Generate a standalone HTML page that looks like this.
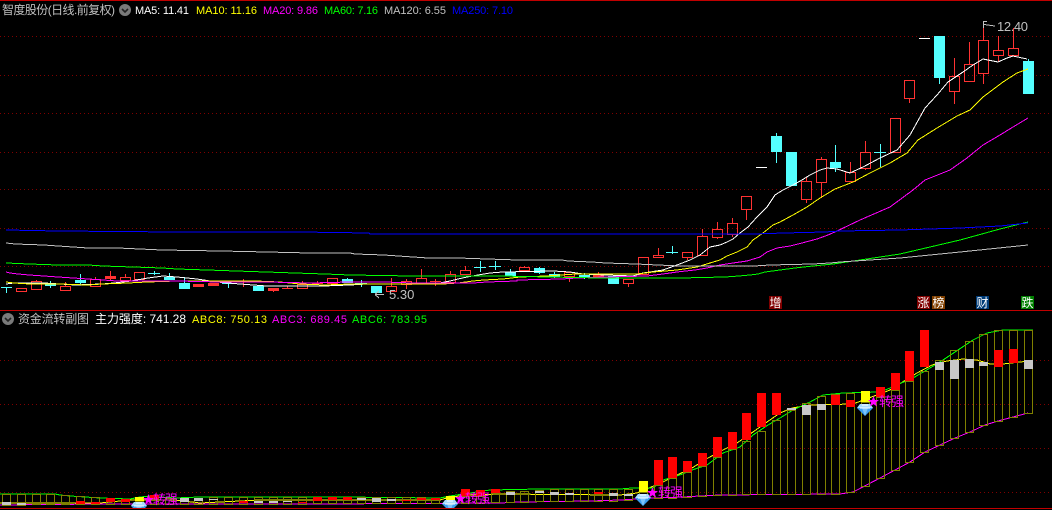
<!DOCTYPE html>
<html lang="zh">
<head>
<meta charset="utf-8">
<title>智度股份</title>
<style>
html,body{margin:0;padding:0;background:#000;width:1052px;height:510px;overflow:hidden}
svg{display:block}
.c{font-family:"Liberation Sans","Noto Sans CJK SC",sans-serif;font-size:12px}
.a{font-family:"Liberation Sans",sans-serif;font-size:11px}
.n{font-family:"Liberation Sans",sans-serif;font-size:13px;fill:#c0c0c0}
.t{font-family:"Noto Sans CJK SC",sans-serif;font-size:12px;fill:#fff;text-anchor:middle}
.z{font-family:"Noto Sans CJK SC",sans-serif;font-size:13px;fill:#f0f}
</style>
</head>
<body>
<svg width="1052" height="510" viewBox="0 0 1052 510" xmlns="http://www.w3.org/2000/svg">
<defs>
<g id="gem">
<path d="M3 0H13L16 4L8 12L0 4Z" fill="#3c9ff0"/>
<path d="M3 0H13L16 4H0Z" fill="#a9dcff"/>
<path d="M5 4L8 12L11 4Z" fill="#7cc4fa"/>
<path d="M3 4H13M5 1H11" stroke="#fff" fill="none"/>
</g>
<path id="star" d="M5.5 0L7 4H11L7.8 6.5L9 10.5L5.5 8.1L2 10.5L3.2 6.5L0 4H4Z" fill="#f0f"/>
<g id="chev"><circle cx="6" cy="6" r="6" fill="#7a7a7a"/><path d="M3 5L6 8L9 5" fill="none" stroke="#222" stroke-width="1.6"/></g>
</defs>

<rect width="1052" height="510" fill="#000"/>

<!-- grid -->
<g stroke="#800000" stroke-dasharray="1 3" shape-rendering="crispEdges" fill="none">
<path d="M0 36.5H1052M0 75.5H1052M0 113.5H1052M0 152.5H1052M0 189.5H1052M0 228.5H1052M0 266.5H1052M0 360.5H1052M0 404.5H1052M0 448.5H1052M0 492.5H1052"/>
</g>

<!-- separators -->
<g fill="#c00000" shape-rendering="crispEdges">
<rect x="0" y="0" width="1052" height="1"/>
<rect x="0" y="310" width="1052" height="1"/>
<rect x="0" y="508" width="1052" height="1"/>
</g>

<!-- candles -->
<g shape-rendering="crispEdges">
<path fill="none" stroke="#ff3232" d="
M16.5 288.5h10v3h-10z
M31.5 281.5h10v8h-10zM36.5 280V281
M60.5 286.5h10v4h-10zM65.5 282V286
M90.5 279.5h10v7h-10zM95.5 277V279
M120.5 277.5h10v3h-10zM125.5 274V277M125.5 281V282
M134.5 272.5h10v7h-10z
M297.5 284.5h10v4h-10zM302.5 281V284
M327.5 278.5h10v5h-10z
M386.5 286.5h10v5h-10zM391.5 278V286
M401.5 281.5h10v3h-10zM406.5 279V281M406.5 285V289
M416.5 278.5h10v5h-10zM421.5 269V278
M445.5 274.5h10v8h-10zM450.5 271V274
M460.5 270.5h10v4h-10zM465.5 266V270
M519.5 267.5h10v3h-10zM524.5 266V267M524.5 271V272
M564.5 272.5h10v4h-10zM569.5 277V282
M623.5 279.5h10v4h-10zM628.5 284V287
M638.5 257.5h10v17h-10z
M653.5 255.5h10v2h-10zM658.5 248V255
M682.5 252.5h10v5h-10zM687.5 258V260
M697.5 236.5h10v19h-10zM702.5 229V236
M712.5 229.5h10v8h-10zM717.5 222V229M717.5 238V239
M727.5 223.5h10v11h-10zM732.5 218V223M732.5 235V237
M741.5 196.5h10v13h-10zM746.5 210V220
M801.5 181.5h10v18h-10zM806.5 177V181M806.5 200V203
M816.5 159.5h10v23h-10zM821.5 157V159M821.5 183V198
M845.5 172.5h10v9h-10zM850.5 162V172
M860.5 152.5h10v16h-10zM865.5 141V152M865.5 169V170
M890.5 118.5h10v34h-10z
M904.5 80.5h10v18h-10zM909.5 99V103
M949.5 76.5h10v15h-10zM954.5 58V76M954.5 92V104
M964.5 64.5h10v17h-10zM969.5 42V64
M978.5 40.5h10v33h-10zM983.5 22V40M983.5 74V84
M993.5 50.5h10v5h-10zM998.5 36V50M998.5 56V62
M1008.5 48.5h10v7h-10zM1013.5 28V48
"/>
<g fill="#ff3232">
<rect x="105" y="276" width="11" height="3"/><rect x="193" y="284" width="11" height="3"/><rect x="208" y="283" width="11" height="3"/><rect x="268" y="288" width="11" height="3"/><rect x="593" y="275" width="11" height="3"/>
</g>
<path fill="none" stroke="#ff3232" d="M110.5 271V281M238 281.5H249M243.5 279V287M282 288.5H293M287.5 286V289M312 283.5H323M317.5 281V284M273.5 291V292M430 281.5H441M435.5 279V286M598.5 272V275"/>
<g fill="#54ffff">
<rect x="45" y="283" width="11" height="3"/><rect x="75" y="280" width="11" height="3"/><rect x="164" y="277" width="11" height="3"/><rect x="179" y="283" width="11" height="6"/><rect x="253" y="286" width="11" height="5"/><rect x="342" y="279" width="11" height="4"/><rect x="371" y="286" width="11" height="7"/><rect x="505" y="272" width="11" height="4"/><rect x="534" y="268" width="11" height="5"/><rect x="549" y="274" width="11" height="3"/><rect x="579" y="275" width="11" height="3"/><rect x="608" y="276" width="11" height="8"/><rect x="771" y="136" width="11" height="16"/><rect x="786" y="152" width="11" height="34"/><rect x="830" y="162" width="11" height="6"/><rect x="934" y="36" width="11" height="42"/><rect x="1023" y="61" width="11" height="33"/>
</g>
<path fill="none" stroke="#54ffff" d="M1 287.5H12M6.5 287V293M50.5 281V288M80.5 274V284M154.5 271V275M148 273.5H160M169.5 273V277M184.5 277V283M228.5 282V288M222 283.5H234M347.5 278V279M361.5 280V287M355 283.5H367M480.5 261V272M474 267.5H486M495.5 261V270M489 266.5H501M510.5 269V276M539.5 267V274M554.5 272V278M584.5 273V279M672.5 246V254M666 252.5H678M776.5 133V163M835.5 145V172M880.5 144V167M874 152.5H886M939.5 78V84M1028.5 59V61"/>
<path fill="none" stroke="#fff" d="M756 167.5H767M919 38.5H930"/>
</g>

<!-- moving averages -->
<g fill="none" shape-rendering="crispEdges">
<polyline stroke="#ffffff" points="6,284 14,283 44,283 60,284 75,285 102,284 114,283 131,281 148,278 163,276 177,277 197,279 217,282 240,284 267,286 282,286 323,286 350,285 367,284 425,284 440,283 450,281 458,279 467,277 478,275 490,273 503,272 553,271 570,272 583,274 606,275 633,276 643,273 663,270 677,265 690,260 700,255 710,247 720,245 727,242 733,239 740,233 748,227 757,217 767,207 775,195 783,190 793,185 802,180 810,175 820,170 827,168 837,169 850,173 863,167 880,158 897,150 910,135 925,108 937,95 948,82 963,72 973,65 983,59 998,62 1007,58 1013,56 1027,59"/>
<polyline stroke="#ffff00" points="6,282 14,283 30,284 60,284 88,285 102,284 128,283 147,282 177,281 255,281 280,282 300,284 325,285 350,284 443,284 458,283 473,281 484,280 503,279 520,277 546,276 576,274 620,274 637,274 653,272 677,270 697,267 710,263 720,260 727,256 737,252 747,247 753,240 763,233 773,225 780,222 793,215 807,207 820,198 835,189 853,182 870,173 890,163 907,153 918,140 937,128 957,116 970,110 983,97 1003,82 1017,73 1028,69"/>
<polyline stroke="#ff00ff" points="6,272 10,273 18,274 29,275 44,276 58,277 73,278 88,279 103,280 117,281 177,281 220,282 267,282 310,283 350,282 384,282 413,283 473,283 487,282 517,281 517,280 562,279 577,278 606,277 647,276 663,274 677,272 695,270 707,268 720,265 733,263 747,261 760,257 767,252 777,248 790,246 802,243 817,239 828,235 837,231 860,220 890,207 913,190 925,180 950,170 967,158 983,145 1000,135 1013,127 1028,118"/>
<polyline stroke="#00ff00" points="6,263 29,264 58,265 88,265 103,266 133,267 162,268 177,269 207,270 236,271 266,272 295,273 325,274 350,275 413,276 500,276 600,278 680,278 725,277 739,276 750,275 758,274 765,272 780,270 795,268 813,266 833,264 840,263 900,254 960,240 1000,229 1028,222"/>
<polyline stroke="#c0c0c0" points="6,243 15,244 44,245 58,246 88,248 118,248 162,250 221,251 267,252 310,253 350,253 355,254 384,255 413,257 428,258 458,258 487,259 518,260 562,260 568,261 592,262 606,263 636,264 680,266 754,266 770,265 813,264 830,263 840,262 900,258 960,252 1028,245"/>
<polyline stroke="#0000ff" points="6,230 58,231 177,232 300,232 369,233 370,234 754,234 784,233 825,232 840,231 900,230 960,228 1000,226 1028,223"/>
</g>

<!-- flags -->
<g fill="none" stroke="#c0c0c0" stroke-width="1" shape-rendering="crispEdges">
<path d="M375 294.5H384M375 294.5L379 291M375 294.5L379 298"/>
<path d="M983.5 21V28M983.5 21.5H987M984 24.5L995 26"/>
</g>
<text class="n" x="389" y="299">5.30</text>
<text class="n" x="997" y="31" textLength="31">12.40</text>

<!-- title text -->
<text class="c" x="2" y="14" fill="#c0c0c0" textLength="113">智度股份(日线.前复权)</text>
<use href="#chev" x="119" y="4"/>
<text class="a" x="135" y="14" fill="#fff" textLength="54">MA5: 11.41</text>
<text class="a" x="196" y="14" fill="#ff0" textLength="61">MA10: 11.16</text>
<text class="a" x="263" y="14" fill="#f0f" textLength="55">MA20: 9.86</text>
<text class="a" x="324" y="14" fill="#0f0" textLength="54">MA60: 7.16</text>
<text class="a" x="384" y="14" fill="#c0c0c0" textLength="62">MA120: 6.55</text>
<text class="a" x="452" y="14" fill="#0000ff" textLength="61">MA250: 7.10</text>

<!-- tags -->
<g shape-rendering="crispEdges">
<rect x="769" y="296" width="13" height="13" fill="#800000"/>
<rect x="917" y="296" width="13" height="13" fill="#800000"/>
<rect x="932" y="296" width="13" height="13" fill="#804000"/>
<rect x="976" y="296" width="13" height="13" fill="#003c78"/>
<rect x="1021" y="296" width="13" height="13" fill="#008000"/>
</g>
<text class="t" x="775.5" y="307">增</text>
<text class="t" x="923.5" y="307">涨</text>
<text class="t" x="938.5" y="307">榜</text>
<text class="t" x="982.5" y="307">财</text>
<text class="t" x="1027.5" y="307">跌</text>

<!-- sub chart header -->
<use href="#chev" x="2" y="313"/>
<text class="c" x="18" y="323" fill="#c0c0c0" textLength="71">资金流转副图</text>
<text class="c" x="95" y="323" fill="#fff" textLength="91">主力强度: 741.28</text>
<text class="a" x="192" y="323" fill="#ff0" textLength="75">ABC8: 750.13</text>
<text class="a" x="272" y="323" fill="#f0f" textLength="75">ABC3: 689.45</text>
<text class="a" x="352" y="323" fill="#0f0" textLength="75">ABC6: 783.95</text>

<!-- sub chart lines -->
<g fill="none" shape-rendering="crispEdges">
<polyline stroke="#ffff00" points="0,503 100,503 130,500 175,500 200,503 260,500 330,500 440,500 450,497 470,495 500,494 620,495 637,493 663,482 677,475 692,468 708,458 723,450 737,443 753,432 767,422 780,413 792,408 810,405 853,404 890,390 917,373 932,365 947,361 963,359 977,360 990,364 1003,364 1020,362 1030,361"/>
<polyline stroke="#ff00ff" points="0,505 100,504 320,504 500,503 520,502 590,501 620,500 653,498 683,497 700,496 720,495 840,494 853,492 857,490 880,478 895,470 910,462 925,452 940,445 955,438 970,432 985,425 998,421 1013,417 1028,413"/>
<polyline stroke="#00ff00" points="0,494 55,494 60,495 70,496 85,497 100,498 130,499 140,497 150,496 160,497 175,498 200,497 340,497 440,498 450,496 470,493 490,490 540,489 620,489 632,488 653,488 663,480 680,475 692,470 707,465 723,453 740,447 753,435 768,425 780,418 793,410 810,402 823,395 843,393 880,392 890,388 913,378 930,368 943,360 958,350 973,340 987,333 1003,330 1033,330"/>
</g>

<!-- sub chart olive bars -->
<g shape-rendering="crispEdges">
<path fill="none" stroke="#808000" d="
M2.5 494.5h8v11h-8zM17.5 494.5h8v11h-8zM32.5 494.5h8v10h-8zM46.5 494.5h8v10h-8zM61.5 495.5h8v9h-8zM76.5 496.5h8v8h-8zM91.5 497.5h8v7h-8zM106.5 498.5h8v6h-8zM121.5 499.5h8v5h-8zM135.5 501.5h8v3h-8zM150.5 499.5h8v5h-8zM165.5 498.5h8v6h-8zM180.5 498.5h8v6h-8zM194.5 498.5h8v6h-8zM209.5 497.5h8v7h-8zM224.5 497.5h8v7h-8zM239.5 497.5h8v7h-8zM254.5 497.5h8v7h-8zM269.5 497.5h8v7h-8zM283.5 497.5h8v7h-8zM298.5 497.5h8v7h-8zM313.5 497.5h8v6h-8z
M328.5 497.5h8v6h-8zM343.5 497.5h8v6h-8zM357.5 497.5h8v6h-8zM372.5 497.5h8v6h-8zM387.5 497.5h8v6h-8zM402.5 497.5h8v6h-8zM417.5 497.5h8v6h-8zM431.5 498.5h8v5h-8zM446.5 499.5h8v4h-8zM461.5 496.5h8v7h-8zM476.5 496.5h8v7h-8zM491.5 493.5h8v9h-8zM506.5 491.5h8v11h-8zM520.5 491.5h8v11h-8zM535.5 490.5h8v11h-8zM550.5 489.5h8v12h-8zM565.5 489.5h8v12h-8zM580.5 489.5h8v12h-8zM594.5 489.5h8v12h-8zM609.5 489.5h8v12h-8zM624.5 489.5h8v11h-8z
M639.5 492.5h8v6h-8zM654.5 485.5h8v13h-8zM668.5 478.5h8v20h-8zM683.5 472.5h8v25h-8zM698.5 466.5h8v30h-8zM713.5 457.5h8v38h-8zM728.5 449.5h8v46h-8zM742.5 441.5h8v53h-8zM757.5 431.5h8v63h-8zM772.5 420.5h8v74h-8zM787.5 410.5h8v84h-8zM802.5 403.5h8v91h-8zM817.5 396.5h8v98h-8zM831.5 394.5h8v100h-8zM846.5 393.5h8v99h-8z
M861.5 402.5h8v84h-8zM876.5 397.5h8v81h-8zM891.5 390.5h8v80h-8zM905.5 381.5h8v81h-8zM920.5 371.5h8v81h-8zM935.5 360.5h8v85h-8zM950.5 350.5h8v88h-8zM965.5 341.5h8v91h-8zM979.5 334.5h8v91h-8zM994.5 330.5h8v91h-8zM1009.5 330.5h8v87h-8zM1024.5 330.5h8v83h-8z"/>

<g fill="#ff0000">
<rect x="76" y="501" width="9" height="3"/><rect x="91" y="502" width="9" height="2"/><rect x="106" y="498" width="9" height="4"/><rect x="121" y="499" width="9" height="3"/><rect x="150" y="495" width="9" height="4"/><rect x="239" y="501" width="9" height="2"/><rect x="298" y="502" width="9" height="1"/><rect x="313" y="497" width="9" height="4"/><rect x="328" y="497" width="9" height="3"/><rect x="343" y="497" width="9" height="3"/><rect x="402" y="500" width="9" height="1"/><rect x="417" y="498" width="9" height="2"/><rect x="431" y="498" width="9" height="2"/><rect x="461" y="489" width="9" height="7"/><rect x="476" y="490" width="9" height="6"/><rect x="491" y="489" width="9" height="4"/><rect x="594" y="492" width="9" height="2"/>
<rect x="654" y="460" width="9" height="25"/><rect x="668" y="457" width="9" height="21"/><rect x="683" y="461" width="9" height="11"/><rect x="698" y="453" width="9" height="13"/><rect x="713" y="437" width="9" height="20"/><rect x="728" y="432" width="9" height="17"/><rect x="742" y="413" width="9" height="27"/><rect x="757" y="393" width="9" height="34"/><rect x="772" y="393" width="9" height="22"/><rect x="831" y="395" width="9" height="10"/><rect x="846" y="400" width="9" height="7"/><rect x="876" y="387" width="9" height="10"/><rect x="891" y="373" width="9" height="17"/><rect x="905" y="351" width="9" height="30"/><rect x="920" y="330" width="9" height="37"/><rect x="994" y="350" width="9" height="17"/><rect x="1009" y="349" width="9" height="14"/>
</g>
<g fill="#c8c8c8">
<rect x="2" y="502" width="9" height="3"/><rect x="17" y="503" width="9" height="2"/><rect x="180" y="498" width="9" height="4"/><rect x="194" y="498" width="9" height="3"/><rect x="209" y="499" width="9" height="1"/><rect x="254" y="501" width="9" height="2"/><rect x="269" y="501" width="9" height="2"/><rect x="283" y="501" width="9" height="1"/><rect x="357" y="498" width="9" height="2"/><rect x="372" y="498" width="9" height="4"/><rect x="387" y="499" width="9" height="2"/><rect x="506" y="492" width="9" height="3"/><rect x="535" y="491" width="9" height="2"/><rect x="550" y="492" width="9" height="3"/><rect x="565" y="493" width="9" height="2"/><rect x="609" y="493" width="9" height="3"/><rect x="624" y="494" width="9" height="2"/>
<rect x="787" y="408" width="9" height="2"/><rect x="802" y="405" width="9" height="10"/><rect x="817" y="404" width="9" height="6"/><rect x="935" y="362" width="9" height="8"/><rect x="950" y="360" width="9" height="19"/><rect x="965" y="359" width="9" height="9"/><rect x="979" y="362" width="9" height="4"/><rect x="1024" y="360" width="9" height="9"/>
</g>
<g fill="#ffff00">
<rect x="135" y="497" width="9" height="4"/><rect x="446" y="496" width="9" height="4"/><rect x="639" y="481" width="9" height="11"/><rect x="861" y="391" width="9" height="11"/>
</g>
</g>

<!-- gems -->
<svg x="131" y="502" width="16" height="6" overflow="hidden"><use href="#gem"/></svg>
<svg x="442" y="500" width="16" height="8" overflow="hidden"><use href="#gem"/></svg>
<use href="#gem" x="635" y="494"/>
<use href="#gem" x="857" y="404"/>

<!-- signals -->
<use href="#star" x="143" y="494"/><text class="z" x="153" y="504" textLength="25">转强</text>
<use href="#star" x="455" y="493"/><text class="z" x="465" y="503" textLength="25">转强</text>
<use href="#star" x="647" y="487"/><text class="z" x="658" y="497" textLength="25">转强</text>
<use href="#star" x="868" y="396"/><text class="z" x="879" y="406" textLength="25">转强</text>
</svg>
</body>
</html>
